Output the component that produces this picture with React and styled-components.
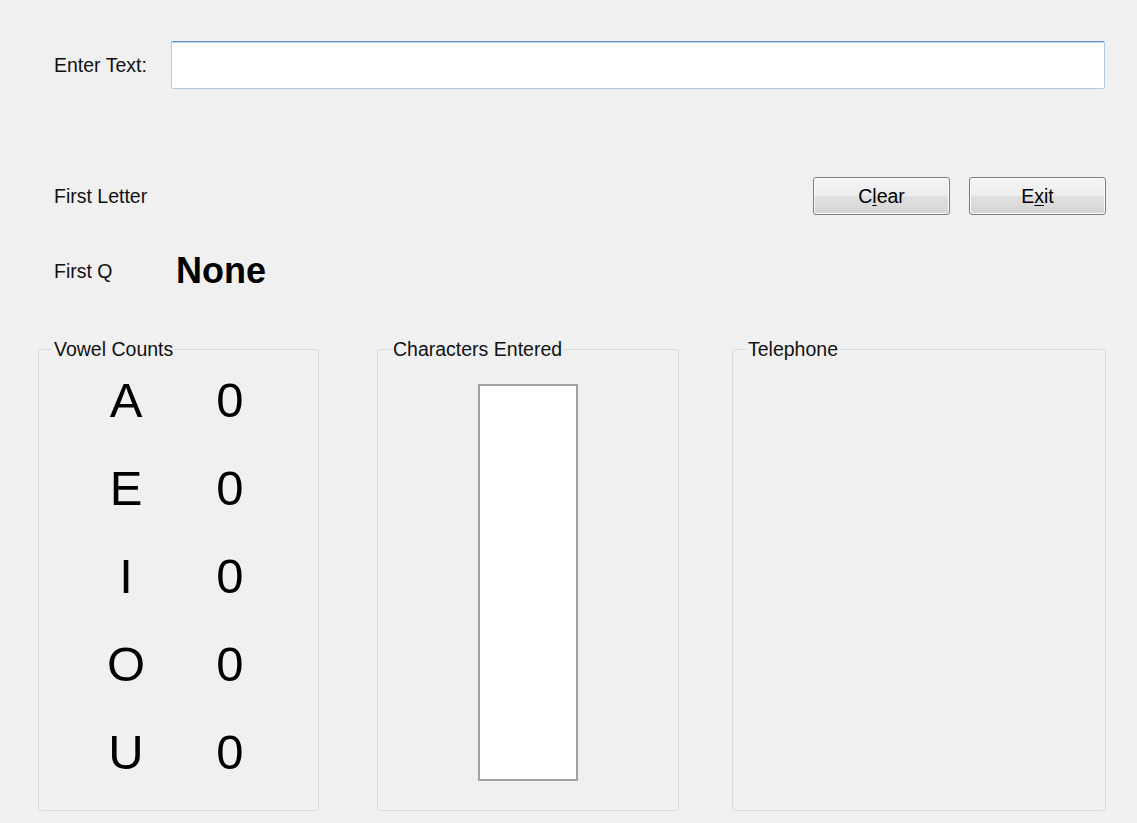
import React, { useState } from "react";
import styled, { createGlobalStyle } from "styled-components";

const GlobalStyle = createGlobalStyle`
  html, body {
    margin: 0;
    padding: 0;
    background: #f0f0f0;
  }
  body {
    font-family: "Liberation Sans", Arial, sans-serif;
    color: #000;
  }
`;

const Window = styled.div`
  width: 1137px;
  height: 823px;
  box-sizing: border-box;
  padding: 41px 31px 0 38px;
  background: #f0f0f0;
  overflow: hidden;
`;

const Row = styled.div`
  display: flex;
  align-items: center;
  height: ${(p) => p.$h}px;
  margin-top: ${(p) => p.$top || 0}px;
`;

const Label = styled.label`
  flex-shrink: 0;
  box-sizing: border-box;
  width: ${(p) => (p.$w ? `${p.$w}px` : "auto")};
  padding-left: 16px;
  font-size: 19.5px;
  color: #111;
`;

const TextInput = styled.input`
  flex: 1;
  height: 48px;
  box-sizing: border-box;
  margin: 0 1px 0 0;
  padding: 0 6px;
  border: 1px solid #aecbe6;
  border-top-color: #5f92c4;
  border-radius: 2px;
  box-shadow: inset 0 1px 0 #bcd6ee;
  background: #fff;
  font: 19.5px "Liberation Sans", Arial, sans-serif;
  outline: none;
`;

const Spacer = styled.div`
  flex: 1;
`;

const Button = styled.button`
  width: 137px;
  height: 38px;
  box-sizing: border-box;
  padding: 0;
  border: 1px solid #7d7d7d;
  border-radius: 3px;
  background: linear-gradient(to bottom, #f4f4f4 0%, #ededed 48%, #e0e0e0 52%, #d4d4d4 100%);
  box-shadow: inset 0 0 0 1px #fbfbfb;
  font: 19.5px "Liberation Sans", Arial, sans-serif;
  color: #000;
  cursor: pointer;

  & + & {
    margin-left: 19px;
  }

  u {
    text-underline-offset: 2px;
  }
`;

const BigValue = styled.span`
  font-size: 36px;
  font-weight: 700;
  color: #000;
`;

const Groups = styled.div`
  display: flex;
  align-items: stretch;
  height: 473px;
  margin-top: 47px;
`;

const Group = styled.fieldset`
  box-sizing: border-box;
  min-width: 0;
  margin: 0 0 0 ${(p) => p.$gap || 0}px;
  padding: 0;
  width: ${(p) => (p.$w ? `${p.$w}px` : "auto")};
  flex: ${(p) => (p.$w ? "none" : "1")};
  border: 1px solid #d0dce4;
  border-radius: 4px;
`;

const Legend = styled.legend`
  margin-left: 13px;
  padding: 0 2px;
  font-size: 19.5px;
  line-height: 22px;
  color: #111;
`;

const VowelGrid = styled.div`
  display: grid;
  grid-template-columns: 60px 60px;
  column-gap: 44px;
  row-gap: 32px;
  justify-items: center;
  padding: 12px 0 0 57px;
  font-size: 49px;
  line-height: 56px;
`;

const ListBox = styled.div`
  width: 100px;
  height: 397px;
  box-sizing: border-box;
  margin: 24px auto 0;
  border: 2px solid #9fa3a8;
  background: #fff;
`;

const VOWELS = ["A", "E", "I", "O", "U"];

export default function App() {
  const [text, setText] = useState("");

  const upper = text.toUpperCase();
  const counts = VOWELS.map((v) => upper.split("").filter((c) => c === v).length);
  const qIndex = upper.indexOf("Q");

  return (
    <>
      <GlobalStyle />
      <Window>
        <Row $h={48}>
          <Label $w={133} htmlFor="entry">Enter Text:</Label>
          <TextInput id="entry" value={text} onChange={(e) => setText(e.target.value)} />
        </Row>

        <Row $h={38} $top={88}>
          <Label>First Letter</Label>
          <Spacer />
          <Button onClick={() => setText("")}>
            C<u>l</u>ear
          </Button>
          <Button>
            E<u>x</u>it
          </Button>
        </Row>

        <Row $h={40} $top={36}>
          <Label $w={138}>First Q</Label>
          <BigValue>{qIndex < 0 ? "None" : qIndex + 1}</BigValue>
        </Row>

        <Groups>
          <Group $w={281}>
            <Legend>Vowel Counts</Legend>
            <VowelGrid>
              {VOWELS.map((v, i) => (
                <React.Fragment key={v}>
                  <span>{v}</span>
                  <span>{counts[i]}</span>
                </React.Fragment>
              ))}
            </VowelGrid>
          </Group>
          <Group $w={302} $gap={58}>
            <Legend>Characters Entered</Legend>
            <ListBox />
          </Group>
          <Group $gap={53}>
            <Legend>Telephone</Legend>
          </Group>
        </Groups>
      </Window>
    </>
  );
}
